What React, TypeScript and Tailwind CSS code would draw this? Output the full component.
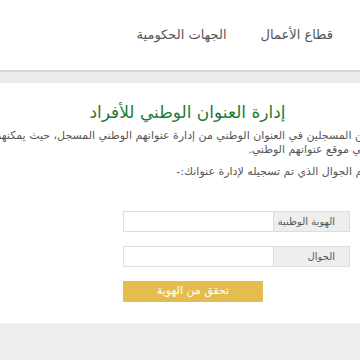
import React from 'react';

const NAV_ITEMS = ['قطاع الأعمال', 'الجهات الحكومية'];

const FIELDS = [{ label: 'الهوية الوطنية' }, { label: 'الجوال' }];

export default function App() {
  return (
    <div
      dir="rtl"
      className="w-[360px] h-[360px] overflow-hidden bg-white text-[#555]"
      style={{ fontFamily: '"DejaVu Sans", sans-serif' }}
    >
      {/* Header */}
      <header className="h-[70px] bg-white flex items-center pr-[27px] gap-[34px]">
        {NAV_ITEMS.map((item) => (
          <a key={item} href="#" className="text-[13px] text-[#555] whitespace-nowrap">
            {item}
          </a>
        ))}
      </header>
      <div className="h-[2px] bg-[#d6d6d6]" />
      <div className="h-[11px] bg-[#ebebeb]" />

      {/* Content */}
      <main className="h-[240px] bg-white pt-[17px]">
        <h1 className="text-[17px] leading-[24px] text-[#1f7a36] text-center pl-[15px]">
          إدارة العنوان الوطني للأفراد
        </h1>

        <div className="mt-[5px] mr-[-40px] text-[11px] leading-[14px] text-[#555] whitespace-nowrap">
          <p>والمقيمين المسجلين في العنوان الوطني من إدارة عنوانهم الوطني المسجل، حيث يمكنهم التحقق</p>
          <p>تحديث في موقع عنوانهم الوطني.</p>
          <p className="mt-[8px]">أدخل رقم الجوال الذي تم تسجيله لإدارة عنوانك:-</p>
        </div>

        <form className="mt-[32px] mr-[10px] w-[227px] flex flex-col gap-[14px]">
          {FIELDS.map((f) => (
            <div key={f.label} className="flex h-[21px]">
              <span className="w-[77px] shrink-0 bg-[#eeeeee] border border-[#dddddd] text-[10px] text-[#555] flex items-center pr-[14px]">
                {f.label}
              </span>
              <input className="flex-1 min-w-0 w-0 bg-white border border-[#dddddd] border-r-0 outline-none" />
            </div>
          ))}
          <button
            type="button"
            className="w-[140px] h-[21px] self-end bg-[#e5bc4e] text-white text-[11px] flex items-center justify-center"
          >
            تحقق من الهوية
          </button>
        </form>
      </main>

      {/* Footer */}
      <footer className="h-[37px] bg-[#ededed]" />
    </div>
  );
}
